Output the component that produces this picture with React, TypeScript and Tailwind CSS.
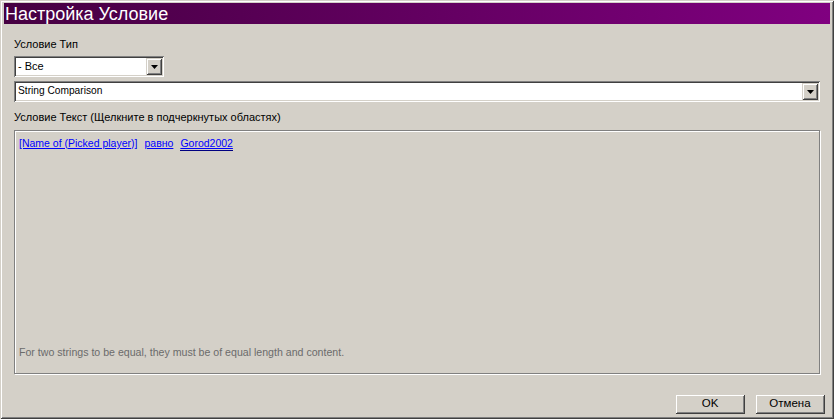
import React from 'react';

const sunken =
  'shadow-[inset_1px_1px_0_#808080,inset_-1px_-1px_0_#ffffff,inset_2px_2px_0_#404040,inset_-2px_-2px_0_#d4d0c8]';
const raised =
  'shadow-[inset_1px_1px_0_#d4d0c8,inset_-1px_-1px_0_#404040,inset_2px_2px_0_#ffffff,inset_-2px_-2px_0_#808080]';

const DropArrow: React.FC = () => (
  <div className={`w-[16px] h-[17px] bg-[#d4d0c8] flex items-center justify-center ${raised}`}>
    <svg width="7" height="4" viewBox="0 0 7 4">
      <path d="M0 0h7L3.5 4z" fill="#000" />
    </svg>
  </div>
);

const Combo: React.FC<{ value: string; className?: string; textClass?: string }> = ({ value, className, textClass }) => (
  <div className={`h-[21px] bg-white flex items-center p-[2px] ${sunken} ${className ?? ''}`}>
    <span className={`flex-1 pl-[2px] leading-none ${textClass ?? ''}`}>{value}</span>
    <DropArrow />
  </div>
);

const Button: React.FC<{ label: string }> = ({ label }) => (
  <div className={`w-[70px] h-[20px] bg-[#d4d0c8] flex items-center justify-center text-[11.5px] ${raised}`}>
    {label}
  </div>
);

export default function App() {
  return (
    <div
      className={`w-[834px] h-[419px] bg-[#d4d0c8] flex flex-col pt-[3px] px-[4px] pb-[5px] text-[11px] text-black ${raised}`}
      style={{ fontFamily: '"Liberation Sans", Arial, sans-serif' }}
    >
      <div className="h-[21px] bg-gradient-to-r from-[#460042] to-[#800080] flex items-center pl-[1px] text-white text-[18px] leading-none">
        Настройка Условие
      </div>
      <div className="flex-1 flex flex-col px-[10px]">
        <div className="mt-[14px] h-[13px] leading-[13px]">Условие Тип</div>
        <Combo value="- Все" className="mt-[5px] w-[150px]" />
        <Combo value="String Comparison" className="mt-[4px] w-full" textClass="text-[10.2px]" />
        <div className="mt-[9px] h-[13px] leading-[13px]">Условие Текст (Щелкните в подчеркнутых областях)</div>
        <div className="mt-[6px] h-[244px] border border-[#808080] shadow-[inset_1px_1px_0_#ffffff,1px_1px_0_#ffffff] flex flex-col justify-between px-[4px] pt-[6px] pb-[14px]">
          <div className="flex gap-[7px] text-[#0000ff] leading-[13px] text-[10.5px]">
            <span className="underline">[Name of (Picked player)]</span>
            <span className="underline">равно</span>
            <span className="underline border-b border-[#000080]">Gorod2002</span>
          </div>
          <div className="text-[#6b6b6b] leading-[13px] text-[10.6px]">
            For two strings to be equal, they must be of equal length and content.
          </div>
        </div>
        <div className="flex-1" />
        <div className="flex justify-end gap-[10px] -mr-[5px]">
          <Button label="OK" />
          <Button label="Отмена" />
        </div>
      </div>
    </div>
  );
}
